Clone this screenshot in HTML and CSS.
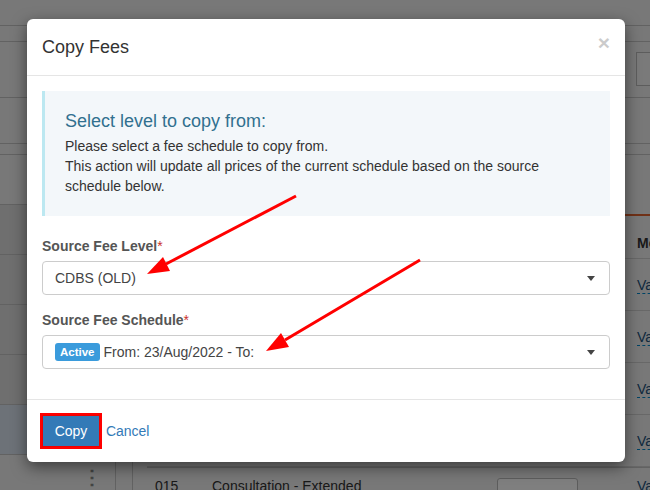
FILE: index.html
```html
<!DOCTYPE html>
<html lang="en">
<head>
    <meta charset="UTF-8">
    <meta name="viewport" content="width=device-width, initial-scale=1.0">
    <title>Copy Fees</title>
    <link rel="stylesheet" href="styles.css">
</head>
<body>
    <!-- page behind the dialog -->
    <div class="app">
        <div class="topbar"></div>
        <div class="subbar"></div>
        <div class="toolbar">
            <div class="search-box"></div>
        </div>
        <div class="section"></div>
        <div class="band"></div>
        <div class="workspace">
            <aside class="sidebar">
                <div class="side-row"></div>
                <div class="side-row dim"></div>
                <div class="side-row dim"></div>
                <div class="side-row dim"></div>
                <div class="side-row dim"></div>
                <div class="side-row selected"></div>
                <div class="side-row"><span class="kebab">&#8942;</span></div>
            </aside>
            <main class="content">
                <div class="tabs"></div>
                <div class="fee-table">
                    <div class="fee-row head">
                        <div></div><div></div><div></div><div class="cell">Mod</div>
                    </div>
                    <div class="fee-row">
                        <div></div><div></div><div></div><div class="cell"><a class="val">Val</a></div>
                    </div>
                    <div class="fee-row">
                        <div></div><div></div><div></div><div class="cell"><a class="val">Val</a></div>
                    </div>
                    <div class="fee-row">
                        <div></div><div></div><div></div><div class="cell"><a class="val">Val</a></div>
                    </div>
                    <div class="fee-row">
                        <div></div><div></div><div></div><div class="cell"><a class="val">Val</a></div>
                    </div>
                    <div class="fee-row">
                        <div class="cell">015</div>
                        <div class="cell">Consultation - Extended</div>
                        <div class="cell"><div class="price-box"></div></div>
                        <div class="cell"><a class="val">Val</a></div>
                    </div>
                </div>
            </main>
        </div>
    </div>

    <div class="backdrop"></div>

    <div class="modal">
        <div class="modal-header">
            <span class="close">&times;</span>
            <h4 class="modal-title">Copy Fees</h4>
        </div>
        <div class="modal-body">
            <div class="callout">
                <h4>Select level to copy from:</h4>
                <p>Please select a fee schedule to copy from.</p>
                <p>This action will update all prices of the current schedule based on the source schedule below.</p>
            </div>
            <div class="form-group">
                <label>Source Fee Level<span class="req">*</span></label>
                <div class="select">
                    <span>CDBS (OLD)</span>
                    <span class="caret"></span>
                </div>
            </div>
            <div class="form-group">
                <label>Source Fee Schedule<span class="req">*</span></label>
                <div class="select">
                    <span class="badge">Active</span>
                    <span>From: 23/Aug/2022 - To:</span>
                    <span class="caret"></span>
                </div>
            </div>
        </div>
        <div class="modal-footer">
            <button class="btn-copy">Copy</button>
            <a class="cancel">Cancel</a>
        </div>
    </div>

    <!-- annotation arrows -->
    <svg class="arrows" width="650" height="490" viewBox="0 0 650 490">
        <line x1="296" y1="196" x2="166" y2="264" stroke="#f00" stroke-width="3"/>
        <polygon points="147,274 170,271 163,257" fill="#f00"/>
        <line x1="420" y1="260" x2="285" y2="340" stroke="#f00" stroke-width="3"/>
        <polygon points="266,351 289,347 281,333" fill="#f00"/>
    </svg>
</body>
</html>
```

FILE: styles.css
```css
* {
    margin: 0;
    padding: 0;
    box-sizing: border-box;
}

body {
    font-family: 'Liberation Sans', Arial, sans-serif;
    font-size: 14px;
    color: #333;
    width: 650px;
    height: 490px;
    overflow: hidden;
    position: relative;
}

/* background page */
.app {
    width: 650px;
    height: 490px;
    background: #f0f0f0;
    display: flex;
    flex-direction: column;
    overflow: hidden;
}

.topbar {
    height: 26px;
    border-bottom: 1px solid #c4c4c4;
}

.subbar {
    height: 16px;
    border-bottom: 1px solid #c4c4c4;
}

.toolbar {
    height: 56px;
    border-bottom: 1px solid #c4c4c4;
    position: relative;
}

.search-box {
    position: absolute;
    left: 636px;
    top: 10px;
    width: 120px;
    height: 34px;
    border: 1px solid #bbb;
    background: #f4f4f4;
}

.section {
    height: 46px;
    border-bottom: 1px solid #c4c4c4;
}

.band {
    height: 11px;
    border-bottom: 1px solid #c4c4c4;
}

.workspace {
    flex: 1;
    display: flex;
    min-height: 0;
}

.sidebar {
    width: 116px;
    flex-shrink: 0;
    border-right: 1px solid #c4c4c4;
}

.side-row {
    height: 50px;
    border-bottom: 1px solid #c4c4c4;
    position: relative;
}

.side-row.dim {
    background: #dedede;
}

.side-row.selected {
    background: #dbe4f0;
}

.kebab {
    position: absolute;
    left: 82px;
    top: 10px;
    font-size: 20px;
    font-weight: bold;
    color: #888;
}

.content {
    flex: 1;
    min-width: 0;
    margin-left: 16px;
    border-left: 1px solid #c4c4c4;
    padding-left: 14px;
}

.tabs {
    height: 61px;
    border-bottom: 2px solid #e0622f;
}

.fee-row {
    display: grid;
    grid-template-columns: 57px 285px 140px 120px;
    height: 52px;
    border-bottom: 1px solid #d0d0d0;
    align-items: center;
}

.fee-row.head {
    height: 43px;
    padding-top: 12px;
    font-weight: bold;
}

.fee-row:last-child {
    border-top: 1px solid #c4c4c4;
    align-items: start;
    padding-top: 10px;
}

.cell {
    padding: 0 8px;
    white-space: nowrap;
}

.price-box {
    width: 81px;
    height: 34px;
    border: 1px solid #bbb;
    border-radius: 3px;
    background: #fff;
}

.val {
    color: #23527c;
    border-bottom: 1px dashed #0088cc;
}

.backdrop {
    position: absolute;
    inset: 0;
    background: rgba(0, 0, 0, 0.5);
}

/* dialog */
.modal {
    position: absolute;
    left: 27px;
    top: 19px;
    width: 598px;
    background: #fff;
    border-radius: 6px;
    box-shadow: 0 5px 15px rgba(0, 0, 0, 0.5);
}

.modal-header {
    padding: 15px;
    border-bottom: 1px solid #e5e5e5;
}

.modal-title {
    font-size: 18px;
    font-weight: normal;
    line-height: 26px;
    color: #333;
}

.close {
    float: right;
    font-size: 21px;
    font-weight: bold;
    line-height: 1;
    color: #000;
    opacity: 0.2;
    margin-top: -2px;
}

.modal-body {
    padding: 15px;
}

.callout {
    background: #f3f7fa;
    border-left: 3px solid #bce8f1;
    padding: 20px;
    margin-bottom: 20px;
}

.callout h4 {
    font-size: 18px;
    font-weight: normal;
    line-height: 20px;
    color: #31708f;
    margin-bottom: 5px;
}

.callout p {
    line-height: 20px;
    color: #333;
}

.form-group {
    margin-bottom: 15px;
}

.form-group label {
    display: block;
    font-weight: bold;
    color: #555;
    line-height: 20px;
    margin-bottom: 5px;
}

.req {
    color: #c9302c;
    font-weight: normal;
}

.select {
    height: 34px;
    border: 1px solid #ccc;
    border-radius: 4px;
    padding: 0 12px;
    display: flex;
    align-items: center;
    color: #444;
}

.caret {
    margin-left: auto;
    margin-right: 2px;
    border-top: 5px solid #444;
    border-left: 4px solid transparent;
    border-right: 4px solid transparent;
}

.badge {
    background: #3a9bdc;
    color: #fff;
    font-size: 11.5px;
    font-weight: bold;
    line-height: 18px;
    height: 18px;
    padding: 0 5px;
    border-radius: 3px;
    margin-right: 4px;
}

.modal-footer {
    padding: 15px;
    border-top: 1px solid #e5e5e5;
}

.btn-copy {
    font-family: inherit;
    font-size: 14px;
    line-height: 18px;
    padding: 6px 0;
    width: 58px;
    color: #fff;
    background: #337ab7;
    border: 1px solid #e00;
    box-shadow: 0 0 0 2px #f00;
}

.cancel {
    color: #337ab7;
    margin-left: 2px;
}

.arrows {
    position: absolute;
    left: 0;
    top: 0;
    pointer-events: none;
}
```
